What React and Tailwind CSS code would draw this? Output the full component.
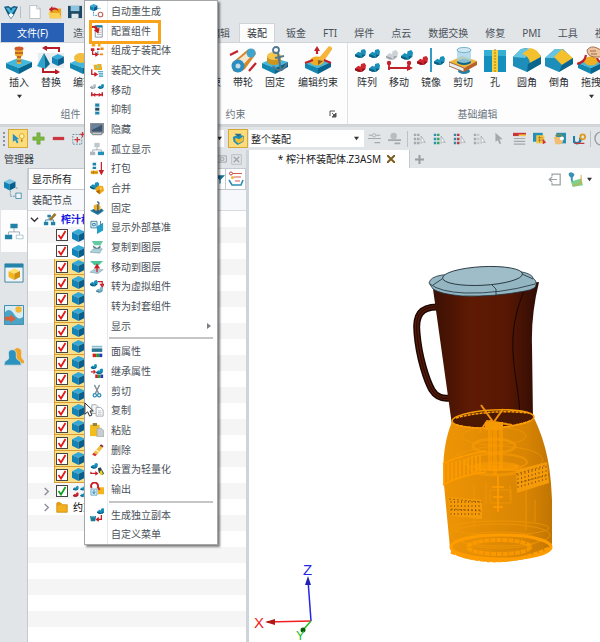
import clsx from "clsx";

/* ---------- drawing helpers ---------- */

const Svg = ({ size = 14, box = 16, className, children }) => (
  <svg
    width={size}
    height={size}
    viewBox={`0 0 ${box} ${box}`}
    className={clsx("shrink-0", className)}
    fill="none"
    aria-hidden="true"
  >
    {children}
  </svg>
);

const Cube = ({ x = 0, y = 0, s = 1, top = "#35a9d6", left = "#1283b8", right = "#075e8c" }) => (
  <g transform={`translate(${x} ${y}) scale(${s})`}>
    <path d="M7 0 L14 3 L7 6.5 L0 3.5Z" fill={top} />
    <path d="M0 3.5 L7 6.5 V14 L0 10.5Z" fill={left} />
    <path d="M14 3 L7 6.5 V14 L14 10.5Z" fill={right} />
  </g>
);

// small bracket-like part used all over the assembly icons
const Part = ({ x = 0, y = 0, s = 1, c = "#1a8fb8", d = "#0b5c80" }) => (
  <g transform={`translate(${x} ${y}) scale(${s})`}>
    <path d="M0 5 L3 2.5 L5 3.5 L5.5 1 L8.5 0 L10 2 L9.5 5.5 L6.5 8 L3 8 L0 6.5Z" fill={c} />
    <path d="M0 5 L3.5 6 L6.5 8 L3 8 L0 6.5Z M9.5 5.5 L6.5 8 L6.5 5Z" fill={d} />
  </g>
);

const Base = () => (
  <>
    <path d="M1 17 L13 12 L27 16 L14 22Z" fill="#43b8dc" />
    <path d="M1 17 L14 22 V28 L1 22Z" fill="#1487b0" />
    <path d="M27 16 L14 22 V28 L27 21Z" fill="#07648c" />
  </>
);

/* ---------- context menu icons ---------- */

const menuIcons = {
  regen: (
    <>
      <Cube x={0} y={0} s={0.6} />
      <path d="M4 9 V13 H9 M8 5 H12" stroke="#2390b8" strokeDasharray="2 1" />
      <circle cx="12" cy="12" r="2.6" stroke="#c0675a" strokeWidth="1.3" />
    </>
  ),
  config: (
    <>
      <path d="M6 2 H14 V15 H6Z" fill="#fff" stroke="#7a8c98" />
      <path d="M6 1.5 H14 V4 H6Z" fill="#1583a8" />
      <path d="M8 7 H13 M8 9.5 H13 M8 12 H13" stroke="#a9b7c0" />
      <path d="M1 3 Q7 0 9 5 L11 4 L9.5 11 L4.5 7 L6.5 6 Q5 3 1 5Z" fill="#c4161c" />
    </>
  ),
  subasm: (
    <>
      <path d="M2 1 H6 V4 H2Z M9 1 H12 V4 H9Z" fill="#f2a81d" />
      <path d="M1 6 H5 V9 H1Z M8 6 H11 V8 H8Z" fill="#c8202a" />
      <path d="M12 5 H15.500 V8 H12Z M11 12 H15 V14 H11Z" fill="#e88b18" />
      <path d="M3 9 V13 H8 M6 11 L9 13 L6 15" stroke="#c8202a" strokeWidth="1.4" />
      <path d="M9 9 V13" stroke="#2390b8" />
    </>
  ),
  folder: (
    <>
      <path d="M4 2 H8 L9 1 H13 L14 8 H5Z" fill="#f0ad1f" />
      <circle cx="9" cy="4.500" r="1.800" fill="#9bcf8c" />
      <path d="M2 7 V13 H7 M5 11 L8 13 L5 15" stroke="#c8202a" strokeWidth="1.5" />
      <path d="M9 10 H15 M10 12.500 H15 M10 15 H15" stroke="#2d96bb" strokeWidth="1.3" />
    </>
  ),
  move: (
    <>
      <Part x={0} y={1} s={0.7} c="#b9c1c6" d="#8b959b" />
      <Part x={9} y={1} s={0.7} />
      <path d="M2 13.500 H14 M2 10.500 V15 M14 10.500 V15" stroke="#c8202a" strokeWidth="1.7" />
      <path d="M3 13.500 L6 11 V16Z M13 13.500 L10 11 V16Z" fill="#c8202a" />
    </>
  ),
  suppress: (
    <>
      <path d="M5.500 1 H11 V15 H5.500Z" fill="#bfd9e4" />
      <path d="M6 2 H10.500 V5 H6Z M6 11.500 H10.500 V14 H6Z" fill="#1d86ad" />
      <path d="M6 6.800 H10.500 V9.800 H6Z" fill="#24505f" />
    </>
  ),
  hide: (
    <>
      <path d="M0 1 H16 V12 L13 15 H3 L0 12Z" fill="#8a9298" />
      <path d="M2 3 H14 V11 H2Z" fill="#3c5672" />
      <path d="M2 3 H14 L2 9Z" fill="#6b84a0" />
      <path d="M3 13 H13" stroke="#d5dade" />
    </>
  ),
  isolate: (
    <>
      <path d="M8 6 V9 M3 11 V9 H13 V11" stroke="#9aa5ab" />
      <path d="M5 1 H11 V6 H5Z" fill="#c0c7cb" />
      <path d="M0 11 H6 V15 H0Z" fill="#aeb8bd" />
      <path d="M9 11 H16 V15 H9Z" fill="#2390b8" />
    </>
  ),
  pack: (
    <>
      <path d="M3 2 H7 V5 H3Z M3 6.500 H7 V9 H3Z" fill="#2185ab" />
      <path d="M1 11 H9 V15 H1Z" fill="#efaa1d" />
      <path d="M4 11 V15 M1 13 H9" stroke="#a66f0c" strokeWidth="0.700" />
      <path d="M13 1 V11 M11 11 L13 15 L15 11Z" stroke="#c8202a" fill="#c8202a" strokeWidth="1.400" />
    </>
  ),
  merge: (
    <>
      <Part x={0} y={1} s={1.05} />
      <path d="M6 8 L10 5 L15 6 L16 11 L11 15 L7 12Z" fill="#f2a71b" />
      <path d="M7 12 L11 10 L11 15Z" fill="#a86208" />
      <path d="M11 7 L14 8 L12 10Z" fill="#ffdf70" />
    </>
  ),
  fix: (
    <>
      <path d="M0 11 L8 7 L16 11 L9 16Z" fill="#1c7fae" />
      <path d="M4 5 L9 3 L12 6 V10 L5 11Z" fill="#efac25" />
      <path d="M8 1 A2 2 0 0 1 10 4 M9 4 V13 M4 10 Q9 17 14 9" stroke="#335f7d" strokeWidth="1.500" />
    </>
  ),
  datum: (
    <>
      <path d="M1 1.500 H8 V9 H1Z" stroke="#397f9e" fill="#dff0f7" />
      <path d="M3 4 H6 V6.500 H3Z" stroke="#397f9e" />
      <path d="M8 7 L15 3 V12 L8 16Z" fill="#249fc9" />
      <path d="M12 1 V6" stroke="#397f9e" />
    </>
  ),
  copyLayer: (
    <>
      <path d="M2 1 H15 L12 6 H5Z" fill="#65c9a4" />
      <path d="M3 6 L8 9 L12 6 V9 L8 11 L4 9Z" fill="#607c86" />
      <path d="M0 14 L4 10 H14 L11 15Z" fill="#a9d3de" stroke="#76929c" strokeWidth="0.600" />
    </>
  ),
  moveLayer: (
    <>
      <path d="M0 1 H15 L10 6 H5Z" fill="#4fc49b" />
      <path d="M0 14 L4 11 H15 L9 15.500Z" fill="#a9d3de" stroke="#76929c" strokeWidth="0.600" />
      <path d="M8 14 V7 M5.800 9 L8 5.500 L10.200 9Z" stroke="#c8202a" fill="#c8202a" strokeWidth="1.500" />
    </>
  ),
  virtual: (
    <>
      <Part x={0} y={1} s={0.9} />
      <Part x={7} y={9} s={0.8} c="#7fb6cc" d="#447f98" />
      <path d="M9 3 H14 V7 M12 6 H16 L14 9Z" stroke="#c8202a" fill="none" strokeWidth="1.300" />
    </>
  ),
  face: (
    <>
      <path d="M2 2 H14 V4 H2Z" fill="#8bbdcf" />
      <path d="M2 5 H14 V9 H2Z" fill="#2a7592" />
      <path d="M3 11 H7 V15 H3Z" fill="#d2231f" />
      <path d="M7 11 H10.500 V15 H7Z" fill="#239c36" />
      <path d="M10.500 11 H14 V15 H10.500Z" fill="#2d35b3" />
    </>
  ),
  inherit: (
    <>
      <Part x={1} y={0} s={0.7} />
      <Part x={7} y={5} s={0.8} />
      <path d="M1 9 H6 L4 7 M6 9 L4 11" stroke="#c8202a" strokeWidth="1.300" />
      <path d="M6 12 H9 V16 H6Z" fill="#c8202a" />
      <path d="M9 12 H12 V16 H9Z" fill="#239c36" />
      <path d="M12 12 H15 V16 H12Z" fill="#2d35b3" />
    </>
  ),
  cut: (
    <>
      <path d="M5 1 L10 11 M11 1 L6 11" stroke="#7d8d97" strokeWidth="1.500" />
      <circle cx="5.500" cy="12.800" r="1.900" stroke="#2d8db3" strokeWidth="1.400" />
      <circle cx="10.500" cy="12.800" r="1.900" stroke="#2d8db3" strokeWidth="1.400" />
    </>
  ),
  copy: (
    <>
      <path d="M2 2 H7 L9 4 V12 H2Z" fill="#f4f5f6" stroke="#9ba3a8" />
      <path d="M7 5 H12 L15 8 V15 H7Z" fill="#fff" stroke="#9ba3a8" />
      <path d="M9 9 H13 M9 11 H13 M9 13 H13" stroke="#b9bfc3" />
    </>
  ),
  paste: (
    <>
      <path d="M0 2 H11 V15 H0Z" fill="#f4bd1c" />
      <path d="M3 0 H8 V3.500 H3Z" fill="#9b8348" />
      <path d="M8 6 H13 L16 9 V16 H8Z" fill="#c8ccce" stroke="#949a9e" strokeWidth="0.700" />
    </>
  ),
  remove: (
    <>
      <path d="M4 11 L11 3 L14.500 5 L8 13Z" fill="#f1bd3a" />
      <path d="M11 3 L12.500 1.500 L15.500 3.500 L14.500 5Z" fill="#8d3131" />
      <path d="M4 11 L8 13 L6 15 L2.500 13.500Z" fill="#d2372f" />
      <path d="M7 8 L10 10" stroke="#fff6d8" strokeWidth="1.500" />
    </>
  ),
  light: (
    <>
      <Part x={1} y={1} s={0.8} />
      <path d="M1 11 V13 H8 M6 11 L8.500 13 L6 15" stroke="#c8202a" strokeWidth="1.400" />
      <path d="M9 7 L12 6 L16 13 L14 15 L10 12Z" fill="#29424b" />
      <path d="M11 11 L13 9 L15 14 L12 15Z" fill="#e9d51a" />
    </>
  ),
  output: (
    <>
      <path d="M9 6 H16 V14 H9Z" fill="#f3b51f" />
      <path d="M2 7 A4 4 0 1 1 9 6 L11 9" stroke="#c8202a" strokeWidth="2.200" />
      <path d="M1 8 H8 V15 H1Z" fill="#dcecf4" stroke="#6da3bb" />
      <path d="M4.500 9 V13 M2.800 11 L4.500 13.500 L6.200 11" stroke="#1c85b0" />
    </>
  ),
  clone: (
    <>
      <Part x={8} y={0} s={0.85} />
      <path d="M0 9 H7 L6 15 H1Z" fill="#1b7c96" />
      <path d="M1 10 H6" stroke="#7fd0e0" />
      <path d="M13 8 V13 H8 M10 11 L7.500 13 L10 15" stroke="#c8202a" strokeWidth="1.500" />
    </>
  ),
};

const menuGroups = [
  [
    ["自动重生成", "regen"],
    ["配置组件", "config", { marked: true }],
    ["组成子装配体", "subasm"],
    ["装配文件夹", "folder"],
    ["移动", "move"],
    ["抑制", "suppress"],
    ["隐藏", "hide"],
    ["孤立显示", "isolate"],
    ["打包", "pack"],
    ["合并", "merge"],
    ["固定", "fix"],
    ["显示外部基准", "datum"],
    ["复制到图层", "copyLayer"],
    ["移动到图层", "moveLayer"],
    ["转为虚拟组件", "virtual"],
    ["转为封套组件", null],
    ["显示", null, { submenu: true }],
  ],
  [
    ["面属性", "face"],
    ["继承属性", "inherit"],
    ["剪切", "cut"],
    ["复制", "copy"],
    ["粘贴", "paste"],
    ["删除", "remove"],
    ["设置为轻量化", "light"],
    ["输出", "output"],
  ],
  [
    ["生成独立副本", "clone"],
    ["自定义菜单", null],
  ],
];

const MenuItem = ({ label, icon, marked, submenu }) => (
  <button role="menuitem" className="relative flex w-full flex-1 items-center text-left">
    <span className="flex w-6 justify-center">{icon && <Svg>{menuIcons[icon]}</Svg>}</span>
    <span className="pl-[2px]">{label}</span>
    {submenu && (
      <Svg size={6} box={6} className="mr-[5px] ml-auto">
        <path d="M1 0 L5 3 L1 6Z" fill="#7a7f84" />
      </Svg>
    )}
    {marked && <span className="absolute -top-px -bottom-1 left-1 w-[72px] border-[3px] border-[#f9a31a]" />}
  </button>
);

const ContextMenu = () => (
  <div
    role="menu"
    className="absolute top-0 left-[84px] flex h-[545px] w-[134px] flex-col border border-[#a5a8ab] bg-white text-[10px] leading-4 text-[#4a5159] shadow-[2px_2px_2px_#00000080]"
  >
    <span className="absolute top-0 bottom-0 left-[22px] border-l border-[#e6e8ea]" />
    {menuGroups.map((items, i) => (
      <div key={i} className="contents">
        {i > 0 && (
          <div className="py-[2px] pr-1 pl-6">
            <hr className="border-t-2 border-[#c3c5c7]" />
          </div>
        )}
        {items.map(([label, icon, opts]) => (
          <MenuItem key={label} label={label} icon={icon} {...opts} />
        ))}
      </div>
    ))}
  </div>
);

/* ---------- ribbon ---------- */

const ribbonIcons = {
  insert: (
    <>
      <Base />
      <path d="M10 3 H18 V9 L16 11 V18 H12 V11 L10 9Z" fill="#efaa2a" />
      <path d="M10 3 H18 M10 7 H18 M12 11 H16 M12 15 H16" stroke="#b65219" strokeWidth="1.500" />
      <ellipse cx="14" cy="2.500" rx="4.500" ry="2" fill="#cf5a2a" />
    </>
  ),
  replace: (
    <>
      <path d="M1 7 H27 V22 H1Z" fill="#e8edf0" />
      <path d="M7 7 L0 20 L8 23Z" fill="#2ba3cb" />
      <path d="M7 7 L8 23 L13 18Z" fill="#0b6a91" />
      <Cube x={15} y={8} s={0.85} />
      <path d="M22 6 V2 H8 M6 22 V26 H20" stroke="#b81d25" strokeWidth="2" />
      <path d="M5 2 L10 -1 V5Z M23 26 L18 23 V29Z" fill="#b81d25" />
    </>
  ),
  edit: (
    <>
      <Base />
      <ellipse cx="12" cy="12" rx="7" ry="5" fill="#f3bd3d" />
    </>
  ),
  belt: (
    <>
      <path d="M3 17 L18 4 Q26 1 27 8 L16 23 Q10 28 4 25Z" fill="#d8892c" />
      <path d="M8 15 L19 6 L23 9 L14 19Z" fill="#f7e6cf" />
      <circle cx="9" cy="20" r="6.500" fill="#2a8ec0" />
      <circle cx="9" cy="20" r="2.500" fill="#c6dce7" />
      <circle cx="22" cy="7" r="4.500" fill="#3fa4ce" />
      <path d="M1 9 L9 5 M27 17 L20 25" stroke="#c2222b" strokeWidth="2.200" />
    </>
  ),
  fixed: (
    <>
      <Base />
      <ellipse cx="13" cy="15" rx="7" ry="4" fill="#cf9420" />
      <path d="M6 10 H20 V15 H6Z" fill="#cf9420" />
      <ellipse cx="13" cy="10" rx="7" ry="4" fill="#f4c64b" />
      <circle cx="15" cy="4" r="3" stroke="#4f7791" strokeWidth="1.800" />
      <path d="M17 7 L20 25 M12 20 Q20 30 26 17 M14 12 L23 10" stroke="#54768c" strokeWidth="2" />
    </>
  ),
  editMate: (
    <>
      <Base />
      <ellipse cx="13" cy="15" rx="7" ry="4.500" fill="#efad24" />
      <path d="M14 13 L25 0 L29 2 L20 15 L14 18Z" fill="#f5b53c" />
      <path d="M14 14 L19 15 L14 19Z" fill="#8c5a25" />
      <path d="M1 17 L9 14 M20 14 L27 17 M13 2 V8" stroke="#c2222b" strokeWidth="2.200" />
      <path d="M10 5 L13 0 L16 5Z" fill="#c2222b" />
    </>
  ),
  array: (
    <>
      <Part x={2} y={3} s={1.1} />
      <Part x={16} y={3} s={1.1} />
      <Part x={2} y={17} s={1.1} c="#cf2630" d="#8c1118" />
      <Part x={16} y={17} s={1.1} />
    </>
  ),
  move: (
    <>
      <Part x={1} y={4} s={1.2} c="#ccd2d6" d="#9aa4aa" />
      <Part x={16} y={4} s={1.2} />
      <path d="M3 22 H25 M4 16 V24 M24 16 V24" stroke="#c2222b" strokeWidth="1.800" />
      <circle cx="4" cy="17" r="2.200" fill="#c2222b" />
      <circle cx="24" cy="17" r="2.200" fill="#c2222b" />
      <path d="M28 22 L22 19 V25Z" fill="#c2222b" />
    </>
  ),
  mirror: (
    <>
      <Part x={0} y={10} s={1.1} c="#cf2630" d="#8c1118" />
      <Part x={17} y={10} s={1.1} />
      <path d="M14 2 V26" stroke="#3499c4" strokeWidth="2" />
    </>
  ),
  trim: (
    <>
      <ellipse cx="15" cy="25" rx="6" ry="3" fill="#1f83a8" />
      <path d="M0 16 L13 10 L28 15 L15 22Z" fill="#f3b733" />
      <path d="M0 16 L15 22 V26 L0 20Z" fill="#eceff1" stroke="#8c4a25" strokeWidth="0.800" />
      <path d="M28 15 L15 22 V26 L28 19Z" fill="#b8622a" />
      <ellipse cx="15" cy="16" rx="7" ry="3" fill="#10658b" />
      <path d="M8 4 V15 Q15 19 22 15 V4Z" fill="#a5d3e6" opacity="0.800" />
      <ellipse cx="15" cy="4" rx="7" ry="2.600" fill="#cfe6f0" stroke="#78b4ce" />
    </>
  ),
  hole: (
    <>
      <path d="M3 4 H25 V26 H3Z" fill="#1390bd" />
      <path d="M3 4 H25 V10 H3Z" fill="#35aed4" />
      <path d="M11 4 H17 V26 H11Z" fill="#f7cf3a" />
      <path d="M14 3 V27" stroke="#a27a14" strokeDasharray="2 1" />
    </>
  ),
  fillet: (
    <>
      <path d="M0 11 L8 3 Q18 0 28 10 V17 L14 26 L0 20Z" fill="#1d8eb9" />
      <path d="M0 11 L8 3 L20 3 L12 12Z" fill="#65c4e0" />
      <path d="M9 8 L17 2 Q25 3 28 11 L17 17 Q16 10 9 8Z" fill="#f5c02e" />
      <path d="M28 11 V18 L14 26 L15 18Z" fill="#0b658c" />
    </>
  ),
  chamfer: (
    <>
      <path d="M0 12 L10 3 H18 L28 13 V17 L14 26 L0 20Z" fill="#1d8eb9" />
      <path d="M0 12 L10 3 L18 3 L9 12Z" fill="#65c4e0" />
      <path d="M9 11 L17 3 L28 12 L17 19Z" fill="#f5c02e" />
      <path d="M28 12 V18 L14 26 L17 19Z" fill="#0b658c" />
    </>
  ),
  drag: (
    <>
      <Base />
      <ellipse cx="14" cy="15" rx="7" ry="4.500" fill="#efad24" />
      <path d="M0 18 Q8 16 9 9 M20 12 Q22 18 28 17" stroke="#c2222b" strokeWidth="2.200" />
      <path d="M10 4 Q14 -1 20 2 L28 6 V11 L17 11 Q10 10 10 4Z" fill="#eec3a0" stroke="#8d5534" strokeWidth="0.800" />
      <path d="M13 5 H19 M14 8 H20" stroke="#8d5534" strokeWidth="0.800" />
    </>
  ),
};

const Caret = ({ className }) => (
  <Svg size={5} box={6} className={className}>
    <path d="M0 1 H6 L3 5Z" fill="#333" />
  </Svg>
);

const RibbonButton = ({ label, icon, wide, caret }) => (
  <button
    className={clsx(
      "flex shrink-0 flex-col items-center text-[10px] leading-4 whitespace-nowrap text-[#2b2f33]",
      wide ? "w-[54px]" : "w-8"
    )}
  >
    <Svg size={28} box={28}>{ribbonIcons[icon]}</Svg>
    <span>{label}</span>
    {caret && <Caret className="mt-1" />}
  </button>
);

const RibbonGroup = ({ title, className, end, launcher, children }) => (
  <section className={clsx("flex shrink-0 flex-col justify-between border-r border-[#dfe2e5] pt-[3px]", className)}>
    <div className={clsx("flex", end ? "justify-end pr-[2px]" : "pl-[3px]")}>{children}</div>
    <div className="flex h-5 items-center">
      <h2 className="flex-1 text-center text-[10px] text-[#6a7580]">{title}</h2>
      {launcher && (
        <button className="w-[18px]" aria-label="约束选项">
          <Svg size={8} box={8}>
            <path d="M1 6 V1 H6" stroke="#555" />
            <path d="M3 3 L6 6 M7 3 V7 H3Z" stroke="#555" fill="#555" />
          </Svg>
        </button>
      )}
    </div>
  </section>
);

const tabs = ["钣金", "FTI", "焊件", "点云", "数据交换", "修复", "PMI", "工具", "视觉"];

const TitleBar = () => (
  <header className="flex h-[23px] shrink-0 items-center pl-1">
    <Svg size={14}>
      <path d="M0 2 L5 1 L8 3 L11 1 L16 2 L11 12 L8 16 L5 12Z" fill="#135a80" />
      <path d="M2 3 L6 3 L8 7 L10 3 L14 3 L9 10 H7Z" fill="#4ab6dc" />
      <path d="M5 11 L8 9 L11 11 L8 15Z" fill="#fff" />
    </Svg>
    <span className="ml-[2px] h-3 w-2 border-l border-[#b9bec2]" />
    <button className="w-5" aria-label="新建">
      <Svg>
        <path d="M2 0.500 H10 L14 4.500 V15.500 H2Z" fill="#fff" stroke="#b3b9bd" />
        <path d="M10 0.500 V4.500 H14" stroke="#b3b9bd" />
      </Svg>
    </button>
    <button className="w-5" aria-label="打开">
      <Svg>
        <path d="M2 6 H6 L7 4 H15 V15 H2Z" fill="#e8a41d" />
        <path d="M0 9 H13 L15 15 H3Z" fill="#fbd055" />
        <path d="M1 5 L5 1 V3 Q11 2 12 7 Q9 4 5 6 V8Z" fill="#c2222b" />
      </Svg>
    </button>
    <button className="w-5" aria-label="保存">
      <Svg>
        <path d="M0 1 H16 V15 H0Z" fill="#1c4863" />
        <path d="M3 1 H13 V7 H3Z" fill="#8fc4de" />
        <path d="M4 10 H12 V15 H4Z" fill="#dfe7ec" />
      </Svg>
    </button>
  </header>
);

const Tabs = () => (
  <nav className="flex h-[19px] shrink-0 items-center text-[10px] leading-[18px] whitespace-nowrap text-[#4a5159]">
    <button className="ml-px h-full w-[63px] shrink-0 bg-[#2860b5] text-white">文件(F)</button>
    <button className="w-[38px] shrink-0">造型</button>
    <button className="ml-auto w-[38px] shrink-0">编辑</button>
    <div className="flex h-full w-[361px] shrink-0">
      <button className="h-full w-9 shrink-0 border border-b-0 border-[#cfd4d8] bg-[#fdfdfe] text-[#30353a]">
        装配
      </button>
      <div className="flex shrink-0 gap-[17px] pl-[11px]">
        {tabs.map((t) => (
          <button key={t} className="shrink-0">{t}</button>
        ))}
      </div>
    </div>
  </nav>
);

const Ribbon = () => (
  <div className="flex h-[83px] shrink-0 border-y border-[#cfd4d8] bg-[#fdfdfe]">
    <RibbonGroup title="组件" className="w-[142px]">
      <RibbonButton label="插入" icon="insert" caret />
      <RibbonButton label="替换" icon="replace" />
      <RibbonButton label="编辑" icon="edit" />
    </RibbonGroup>
    <RibbonGroup title="约束" className="w-[206px]" end launcher>
      <RibbonButton label="约束" />
      <RibbonButton label="带轮" icon="belt" />
      <RibbonButton label="固定" icon="fixed" />
      <RibbonButton label="编辑约束" icon="editMate" wide />
    </RibbonGroup>
    <RibbonGroup title="基础编辑" className="w-[260px]">
      <RibbonButton label="阵列" icon="array" />
      <RibbonButton label="移动" icon="move" />
      <RibbonButton label="镜像" icon="mirror" />
      <RibbonButton label="剪切" icon="trim" />
      <RibbonButton label="孔" icon="hole" />
      <RibbonButton label="圆角" icon="fillet" />
      <RibbonButton label="倒角" icon="chamfer" />
      <RibbonButton label="拖拽" icon="drag" caret />
    </RibbonGroup>
  </div>
);

/* ---------- quick toolbar ---------- */

const List = ({ a = "#a4a9ac", b = "#a4a9ac" }) => (
  <>
    <path d="M1 2 H4 V5 H1Z M1 7 H4 V10 H1Z M1 12 H4 V15 H1Z" fill={a} />
    <path d="M5 2 H8 V5 H5Z M5 7 H8 V10 H5Z M5 12 H8 V15 H5Z" fill={b} />
    <path d="M10 5 V14 L12 12 L15 13Z" fill="#fff" stroke="#a4a9ac" />
  </>
);

const filterIcons = [
  <List key="a" />,
  <List key="b" a="#2b8fae" b="#37a25c" />,
  <List key="c" a="#3587a6" b="#c2333a" />,
  <List key="d" b="#c5c9cc" />,
  <path key="e" d="M3 1 V12 L6 10 L8 15 L10 14 L8 9 L12 9Z" fill="#a3a8ab" />,
  <g key="f">
    <path d="M0 1 H16 V5 H0Z" fill="#c8363b" />
    <path d="M7 3 H16 V5 H7Z" fill="#f3c94c" />
    <path d="M1 8 H15 M1 11.500 H15 M1 15 H15" stroke="#a3a8ab" strokeWidth="1.500" />
  </g>,
  <g key="g">
    <path d="M0 1 H12 V12 H0Z" fill="#2590b4" />
    <path d="M4 4 H14 V14 H4Z" fill="#f4ca45" />
    <path d="M6 7 H12 M6 10 H12 M8 5 V13" stroke="#b3762a" />
    <path d="M12 8 L16 13 L12 15Z" fill="#c8363b" />
  </g>,
  <g key="h">
    <path d="M4 1 H16 V14 H4Z" fill="#2590b4" />
    <path d="M1 6 H12 V13 L9 15 H3Z" fill="#f0bd72" />
    <path d="M3 5 L9 3 L13 7" stroke="#718c52" strokeWidth="2" />
    <circle cx="11" cy="8" r="2.500" fill="#fff" />
  </g>,
  <g key="i">
    <path d="M1 5 V12 Q6 16 9 11 V7" stroke="#237ea6" strokeWidth="3" />
    <circle cx="12" cy="6" r="3" stroke="#dd981f" strokeWidth="2.200" />
    <path d="M2 14 H14" stroke="#c8363b" strokeWidth="1.500" />
  </g>,
];

const ToolButton = ({ label, active, children }) => (
  <button
    aria-label={label}
    className={clsx(
      "flex h-[19px] w-5 shrink-0 items-center justify-center",
      active && "border border-[#d6a83c] bg-[#fddc7c]"
    )}
  >
    <Svg size={13}>{children}</Svg>
  </button>
);

const Toolbar = () => (
  <div className="flex h-[25px] shrink-0 items-center border-t-2 border-[#d2d6d9]">
    <span className="ml-[3px] h-[14px] w-[5px] shrink-0 border-l-2 border-dotted border-[#8c9297]" />
    <ToolButton label="拾取" active>
      <path d="M1 2 V12 L4 10 L6 14 L8 13 L6 9 H9Z" fill="#2a8fc0" />
      <circle cx="12" cy="5" r="3" fill="#fff1a0" stroke="#d69b1f" />
      <path d="M11 9 H13 V12 H11Z" fill="#ad8435" />
    </ToolButton>
    <ToolButton label="添加">
      <path d="M6 1 H10 V6 H15 V10 H10 V15 H6 V10 H1 V6 H6Z" fill="#7bb83f" stroke="#669d34" strokeWidth="0.700" />
    </ToolButton>
    <ToolButton label="移除">
      <path d="M1 6 H15 V10 H1Z" fill="#cc3640" />
    </ToolButton>
    <ToolButton label="框选">
      <path d="M1 3 H12 V15 H1Z" stroke="#4a7a92" strokeDasharray="2 1.500" />
      <path d="M6.500 6 V13 M3 9.500 H10 M13 0 V6 M10 3 H16" stroke="#c8363b" strokeWidth="1.600" />
    </ToolButton>
    <div className="mr-1 flex h-[17px] w-[136px] shrink-0 items-center justify-end bg-white pr-[2px]">
      <Caret />
    </div>
    <ToolButton label="装配范围" active>
      <path d="M1 6 L8 3 L15 5 L14 12 L7 16 L2 12Z" fill="#1d8eb9" />
      <path d="M4 7 L9 9 L14 5 V11 L8 14 L4 11Z" fill="#f3bd30" />
      <path d="M3 2 H12 L8 6Z" fill="#2f6d85" />
    </ToolButton>
    <div className="relative ml-px flex h-[17px] w-[115px] shrink-0">
      <select
        aria-label="选择范围"
        className="h-full w-full appearance-none bg-white pl-[2px] text-[10px] leading-4 text-[#222]"
      >
        <option>整个装配</option>
      </select>
      <Caret className="pointer-events-none absolute top-[6px] right-[5px]" />
    </div>
    <ToolButton label="约束过滤">
      <path d="M1 4 H5 M10 4 H15 M0 8 H16 M8 13 H15" stroke="#a4a9ac" strokeWidth="1.500" />
      <circle cx="7.500" cy="4" r="2" stroke="#a4a9ac" />
    </ToolButton>
    <ToolButton label="组件过滤">
      <circle cx="7" cy="5" r="4" fill="#b8bdc0" />
      <path d="M0 10 H16 M8 14 H15" stroke="#a4a9ac" strokeWidth="2" />
    </ToolButton>
    <span className="ml-[3px] h-4 w-[2px] shrink-0 border-l border-[#bcc1c5]" />
    {filterIcons.map((icon, i) => (
      <ToolButton key={i} label={`过滤 ${i + 1}`}>{icon}</ToolButton>
    ))}
    <span className="ml-px h-4 w-1 shrink-0 border-l border-[#bcc1c5]" />
    <Svg size={15}>
      <circle cx="8" cy="8" r="7" stroke="#979da1" strokeWidth="1.500" />
      <path d="M8 4 V9 H11" stroke="#979da1" strokeWidth="1.500" />
    </Svg>
  </div>
);

/* ---------- manager panel ---------- */

const sideTabs = [
  [
    "历史管理",
    <g key="a">
      <Cube x={0} y={0} s={0.9} top="#7cc4e2" />
      <path d="M7 13 V19 H12 M13 10 H16" stroke="#6b8fa1" strokeDasharray="2 1" />
      <path d="M13 15.500 H19 V21.500 H13Z" fill="#eef4f7" stroke="#4a90b0" />
    </g>,
  ],
  [
    "装配管理",
    <g key="b">
      <path d="M11 7 V12 M5 15 V12 H17 V15" stroke="#9aa8b0" />
      <path d="M7 3 H15 V8 H7Z M1 15 H9 V20 H1Z" fill="#2381a8" />
      <path d="M13.500 15.500 H21 V19.500 H13.500Z" fill="#fff" stroke="#a9c5d1" />
    </g>,
  ],
  [
    "视图管理",
    <g key="c">
      <path d="M1 1 H21 V21 H1Z" fill="#eef4f7" stroke="#387f9e" />
      <path d="M1 1 H21 V5 H1Z" fill="#2584ab" />
      <Cube x={5} y={6} s={0.9} top="#ffe06a" left="#f3b81f" right="#d18f0c" />
    </g>,
  ],
  [
    "视觉管理",
    <g key="d">
      <path d="M0.500 0.500 H21.500 V21.500 H0.500Z" fill="#d9ebf3" stroke="#2b86ab" />
      <path d="M1 8 Q6 2 11 10 T21 13 V21 H1Z" fill="#4ba3c5" />
      <circle cx="16" cy="5" r="3.500" fill="#f7b733" />
      <path d="M1 13 H7 V10.500 L13 15 L7 19.500 V17 H1Z" fill="#d9603b" />
    </g>,
  ],
  [
    "角色管理",
    <g key="e">
      <path d="M14 1 Q20 1 19 8 Q18 12 22 15 V18 H11 V3Z" fill="#f0a429" />
      <path d="M9 3 Q14 3 13.500 9 Q13 13 15 14 Q19 15 19 20 H0 Q0 15 4 14 Q6 13 5 9 Q4 3 9 3Z" fill="#2b93bd" stroke="#e1e5e8" strokeWidth="0.800" />
    </g>,
  ],
];

const CheckBox = ({ label, green }) => (
  <input
    type="checkbox"
    defaultChecked
    aria-label={label}
    className={clsx(
      "h-3 w-3 shrink-0 appearance-none border border-[#444] bg-white bg-center bg-no-repeat",
      green
        ? "checked:bg-[url('data:image/svg+xml;utf8,<svg%20xmlns=%22http://www.w3.org/2000/svg%22%20width=%2210%22%20height=%2210%22><path%20d=%22M1.5%205L4%208.5L8.5%201%22%20fill=%22none%22%20stroke=%22%2310a020%22%20stroke-width=%221.8%22/></svg>')]"
        : "checked:bg-[url('data:image/svg+xml;utf8,<svg%20xmlns=%22http://www.w3.org/2000/svg%22%20width=%2210%22%20height=%2210%22><path%20d=%22M1.5%205L4%208.5L8.5%201%22%20fill=%22none%22%20stroke=%22%23e01818%22%20stroke-width=%221.8%22/></svg>')]"
    )}
  />
);

const PartRow = ({ n, selected }) => (
  <div
    className={clsx(
      "ml-[26px] flex w-28 items-center gap-[4px] border-l pl-px",
      selected ? "border-b border-[#d79b32] bg-[#fbe08c]" : "border-transparent"
    )}
  >
    <CheckBox label={`零件 ${n}`} />
    <Svg size={13} box={14}><Cube /></Svg>
  </div>
);

const Chevron = ({ open }) => (
  <Svg size={9} box={10}>
    <path d={open ? "M1 3 L5 7 L9 3" : "M3 1 L7 5 L3 9"} stroke={open ? "#333" : "#8a8f94"} strokeWidth="1.500" />
  </Svg>
);

const Tree = () => (
  <div className="flex-1 overflow-hidden bg-white text-[10px] leading-4 whitespace-nowrap">
    {Array.from({ length: 27 }, (_, i) => (
      <div key={i} className={clsx("flex h-4", i % 2 === 1 && "bg-[#f5f5f5]")}>
        {i === 0 && (
          <div className="flex items-center gap-[4px] pl-[2px]">
            <Chevron open />
            <Svg size={14}>
              <path d="M5 3 H9 V6 H5Z M1 11 H6 V15 H1Z M9 11 H14 V15 H9Z" fill="#2381a8" />
              <path d="M7 6 V9 M3 11 V9 H12 V11" stroke="#2381a8" />
              <path d="M7 8 L13 1 L15.500 3 L9 10Z" fill="#a0762c" />
            </Svg>
            <span className="font-bold text-[#1414e0]">榨汁杯</span>
          </div>
        )}
        {i > 0 && i < 17 && <PartRow n={i} selected={i > 2} />}
        {i === 17 && (
          <div className="flex items-center gap-[5px] pl-[14px]">
            <Chevron />
            <CheckBox label="阵列" green />
            <Svg size={13}>
              <Part x={0} y={1} s={0.7} />
              <Part x={9} y={1} s={0.7} />
              <Part x={0} y={9} s={0.7} c="#cf2630" d="#8c1118" />
              <Part x={9} y={9} s={0.7} />
            </Svg>
          </div>
        )}
        {i === 18 && (
          <div className="flex items-center gap-[5px] pl-[14px]">
            <Chevron />
            <Svg size={12}>
              <path d="M1 3 H7 L8 5 H15 V15 H1Z" fill="#f2b01e" stroke="#c98509" />
              <circle cx="3.500" cy="3.500" r="2.500" fill="#e39a10" />
            </Svg>
            <span>约束</span>
          </div>
        )}
      </div>
    ))}
  </div>
);

const Manager = () => (
  <aside className="flex w-[246px] shrink-0 flex-col">
    <div className="flex h-[18px] shrink-0 items-center justify-between px-1">
      <h2 className="text-[10px] leading-4 text-[#3a4046]">管理器</h2>
      <div className="flex gap-1">
        <button aria-label="固定面板">
          <Svg size={10}><path d="M1 3 H15 V13 H1Z M5 6 H11 V10 H5Z" stroke="#9ea4a8" strokeWidth="1.500" /></Svg>
        </button>
        <button aria-label="关闭面板">
          <Svg size={11}>
            <path d="M1 1 H15 V15 H1Z" stroke="#aab0b4" />
            <path d="M4 4 L12 12 M12 4 L4 12" stroke="#9ea4a8" strokeWidth="2" />
          </Svg>
        </button>
      </div>
    </div>
    <div className="flex min-h-0 flex-1">
      <div className="flex w-7 shrink-0 flex-col border-r border-[#c4cacf] pl-px">
        {sideTabs.map(([label, icon], i) => (
          <button
            key={label}
            aria-label={label}
            className={clsx("flex h-[42px] shrink-0 items-center justify-center", i === 1 && "bg-[#fdfdfe]")}
          >
            <Svg size={20} box={22}>{icon}</Svg>
          </button>
        ))}
      </div>
      <div className="flex min-w-0 flex-1 flex-col">
        <div className="flex h-[22px] shrink-0 border border-[#c4cacf] bg-white">
          <select
            aria-label="显示过滤"
            className="w-[178px] appearance-none bg-white pl-[3px] text-[10px] leading-4 text-[#222]"
          >
            <option>显示所有</option>
          </select>
          <button aria-label="筛选" className="flex w-[18px] items-center justify-end">
            <Svg size={10}><path d="M0 2 H16 L9 9 V15 H7 V9Z" fill="#176f94" /></Svg>
          </button>
          <button aria-label="列表设置" className="flex flex-1 items-center justify-center border-l border-[#c4cacf]">
            <Svg size={16}>
              <circle cx="3" cy="2.500" r="1.500" stroke="#c8363b" />
              <path d="M5 2.500 H14 M6 6 H13 M7 10 H12" stroke="#d55a4c" strokeWidth="1.200" />
              <circle cx="4.500" cy="6.500" r="1.500" fill="#f1b53b" />
              <path d="M1 9 L4 14 H13 L15 9" stroke="#2b8fb5" strokeWidth="1.600" />
            </Svg>
          </button>
        </div>
        <div className="flex h-[21px] shrink-0 items-center border-b border-[#d9dde0] bg-[#f6f8fb] pl-1 text-[10px] text-[#3a4046]">
          装配节点
        </div>
        <Tree />
      </div>
    </div>
  </aside>
);

/* ---------- viewport ---------- */

const xs = [0, 1, 2, 3, 4, 5, 6, 7, 8, 9];

const Blender = () => (
  <svg
    width="150"
    height="310"
    viewBox="408 260 150 310"
    fill="none"
    className="absolute top-[92px] left-[159px]"
    role="img"
    aria-label="榨汁杯"
  >
    <defs>
      <linearGradient id="body" x1="0" x2="1" y1="0" y2="0">
        <stop offset="0" stopColor="#3a1004" />
        <stop offset="0.350" stopColor="#5f1a03" />
        <stop offset="0.700" stopColor="#571703" />
        <stop offset="1" stopColor="#2f0c05" />
      </linearGradient>
      <linearGradient id="cup" x1="0" x2="1" y1="0" y2="0">
        <stop offset="0" stopColor="#ee9405" />
        <stop offset="0.350" stopColor="#e48d04" />
        <stop offset="0.750" stopColor="#d98503" />
        <stop offset="1" stopColor="#c07502" />
      </linearGradient>
    </defs>

    {/* handle */}
    <path d="M437 307 C421 307 415 315 417 333 C419 358 427 381 432 390 C437 398 443 399 450 398" stroke="#1b0703" strokeWidth="7" />
    <path d="M437 307 C421 307 415 315 417 333 C419 358 427 381 432 390 C437 398 443 399 450 398" stroke="#571a08" strokeWidth="4" />
    <path d="M437 307 C421 307 415 315 417 333 C419 358 427 381 432 390 C437 398 443 399 450 398" stroke="#1b0703" strokeWidth="1" />

    {/* jug */}
    <path d="M433 289 L452 425 Q493 436 533 420 L532 345 Q531 315 539 282 L530 283Z" fill="url(#body)" />
    <path d="M524 291 C510 325 511 350 517 386 Q520 405 520 420" stroke="#160502" />

    {/* lid */}
    <path d="M429 283 Q430 277 442 275 L522 272 Q532 274 533 278 Q537 281 536 284 Q537 289 525 291 Q495 297 462 296 Q440 294 433 289Z" fill="#94b5c2" stroke="#1d3038" strokeWidth="0.800" />
    <path d="M430 284 Q440 292 465 293 Q500 294 535 284" stroke="#1d3038" strokeWidth="0.800" />
    <path d="M442 279 L433 285 M492 285 L496 289 V295 M522 274 L533 279" stroke="#1d3038" strokeWidth="0.800" />
    <ellipse cx="482.500" cy="276" rx="40" ry="9.300" transform="rotate(-3 482 276)" fill="#9fbdc9" stroke="#1d3038" strokeWidth="0.900" />

    {/* motor base */}
    <path d="M452 422 C444 440 442 465 444 485 L450 548 Q453 557 475 560 Q500 564 525 559 Q552 553 552 543 L552 500 C551 465 545 440 533 416 Q528 426 493 428 Q458 430 452 422Z" fill="url(#cup)" />
    <ellipse cx="493" cy="419" rx="41" ry="9" transform="rotate(-3 493 419)" fill="#4a1803" stroke="#f59a05" strokeWidth="1.600" />
    <path d="M456 425 Q493 433 530 421 M456 418 Q490 409 529 413" stroke="#ff9f08" strokeDasharray="3 1" strokeWidth="1.500" />
    <path d="M481 405 L496 426 M503 409 L491 426 M479 433 L487 421 L507 424 M512 425 L489 421" stroke="#ef9208" strokeWidth="2" />
    <path d="M485 422 H503 V430 H485Z" fill="#f59a05" />

    <g stroke="#f99c05" strokeWidth="1" opacity="0.600">
      <ellipse cx="494" cy="436" rx="32" ry="9" />
      <ellipse cx="494" cy="446" rx="21" ry="7" strokeWidth="3" />
      <path d="M446 463 Q460 449 494 446 Q540 447 543 460 Q540 470 500 474" />
      <ellipse cx="496" cy="462" rx="31" ry="8" strokeWidth="2" />
      <ellipse cx="496" cy="469" rx="25" ry="6" strokeWidth="3" />
      <ellipse cx="500" cy="528" rx="49" ry="7" />
      <ellipse cx="500" cy="535" rx="50" ry="11" />
      <ellipse cx="500" cy="540" rx="38" ry="8" />
      <path d="M474 486 V525 M486 483 V503 M510 485 V500 M526 470 V530 M535 500 V522 M490 490 H511 V503 H490Z" />
    </g>
    <g stroke="#ff9c00">
      <path d="M490 430 V470 M495 428 V475 M501 430 V470" strokeWidth="4" opacity="0.600" />
      <path d="M475 468 H518" strokeWidth="6" opacity="0.600" />
      <path d="M498 475 V512 M492 487 H504 M493 497 H503 M493 507 H503" strokeWidth="1.600" />
      <ellipse cx="501" cy="547" rx="50" ry="12" strokeWidth="3" />
      <ellipse cx="499" cy="547" rx="31" ry="7" strokeWidth="4" strokeDasharray="5 1" opacity="0.800" />
      <path d="M451 552 Q500 572 551 547" strokeWidth="3" strokeDasharray="5 1" />
      {xs.map((n) => (
        <path key={n} d={`M${444 + n * 4} ${464 - n} V${484 - n * 1.3}`} strokeWidth="1.600" />
      ))}
      <path d="M443 464 Q455 457 486 451 M443 485 Q460 475 486 472" strokeWidth="1.600" />
    </g>

    {/* engraved lettering bands */}
    <path d="M448 497 L482 500 V519 L450 516Z M516 470 L547 462 L549 483 L517 493Z" fill="#f59a08" />
    <g stroke="#7d4a06" strokeWidth="0.700" strokeDasharray="2 2">
      <path d="M449 499 L482 502 M451 509 L482 511 M516 474 L547 465 M517 483 L549 475" />
      {xs.slice(0, 9).map((n) => (
        <path key={n} d={`M${451 + n * 3.5} 501 V515 M${518 + n * 3.500} ${474 - n} V${490 - n}`} />
      ))}
    </g>
  </svg>
);

const Axes = () => (
  <svg
    width="70"
    height="82"
    viewBox="0 0 70 82"
    className="absolute bottom-0 left-1"
    role="img"
    aria-label="坐标系"
    fontFamily="Liberation Sans, sans-serif"
    fontSize="15"
  >
    <path d="M58 61 L55 20" stroke="#2525e8" strokeWidth="1.500" />
    <path d="M55 16 L52 25 H58Z" fill="#2020b8" />
    <path d="M58 61 L14 62" stroke="#f02020" strokeWidth="1.500" />
    <path d="M12 62 L22 59 V65Z" fill="#b01818" />
    <path d="M58 61 L50 70" stroke="#20c020" strokeWidth="1.500" />
    <circle cx="50" cy="70" r="2.500" fill="#0d5c0d" />
    <text x="50" y="15" fill="#2525e8">Z</text>
    <text x="1" y="68" fill="#f02020">X</text>
    <text x="43" y="80" fill="#20c020" fontSize="13">Y</text>
  </svg>
);

const Viewport = () => (
  <main className="flex min-w-0 flex-1 flex-col">
    <div className="flex h-[18px] shrink-0 items-center">
      <div className="flex h-full w-[160px] shrink-0 items-center justify-end gap-[6px] bg-white pr-[14px] text-[10px] leading-4 text-[#222]">
        <span className="whitespace-nowrap">* 榨汁杯装配体.Z3ASM</span>
        <button aria-label="关闭文档">
          <Svg size={8} box={8}><path d="M0 0 L8 8 M8 0 L0 8" stroke="#7a5c1e" strokeWidth="2" /></Svg>
        </button>
      </div>
      <button className="flex h-full w-5 items-center justify-center border-l border-[#c4cacf]" aria-label="新标签">
        <Svg size={9} box={9}><path d="M4.500 0 V9 M0 4.500 H9" stroke="#9b9da0" strokeWidth="2" /></Svg>
      </button>
    </div>
    <div className="relative flex-1 bg-white">
      <div className="flex items-center justify-end gap-[7px] pt-1 pr-2">
        <button aria-label="退出">
          <Svg size={13}>
            <path d="M5 4 V1.500 H15 V14.500 H5 V12 M1 8 H11 M5 5 L1.500 8 L5 11" stroke="#9ba1a5" strokeWidth="1.500" />
          </Svg>
        </button>
        <button aria-label="显示模式" className="flex items-center gap-1">
          <Svg size={15}>
            <path d="M3 10 L14 7 L16 14 L5 16Z" fill="#7fd08b" />
            <path d="M1 1 Q5 -1 7 3 L5 6 V11 L3 9 V6 Q0 4 1 1Z" fill="#3b8fb2" />
            <path d="M14 3 V12 L6 14" stroke="#e2a23a" />
          </Svg>
          <Caret />
        </button>
      </div>
      <Blender />
      <Axes />
    </div>
  </main>
);

const App = () => {
  return (
    <div className="relative flex h-screen w-full flex-col overflow-hidden bg-[#e1e5e8] font-['Noto_Sans','Noto_Sans_CJK_SC',sans-serif]">
      <TitleBar />
      <Tabs />
      <Ribbon />
      <Toolbar />
      <div className="flex min-h-0 flex-1">
        <Manager />
        <div className="w-[3px] shrink-0 bg-[#cdd4da]" />
        <Viewport />
      </div>

      <ContextMenu />
      <Svg size={15} className="absolute top-[402px] left-[83px]">
        <path d="M2 1 V13 L5 10.500 L7 15 L9.500 14 L7.500 9.500 H11Z" fill="#fff" stroke="#222" />
      </Svg>
    </div>
  );
};

export default App;
